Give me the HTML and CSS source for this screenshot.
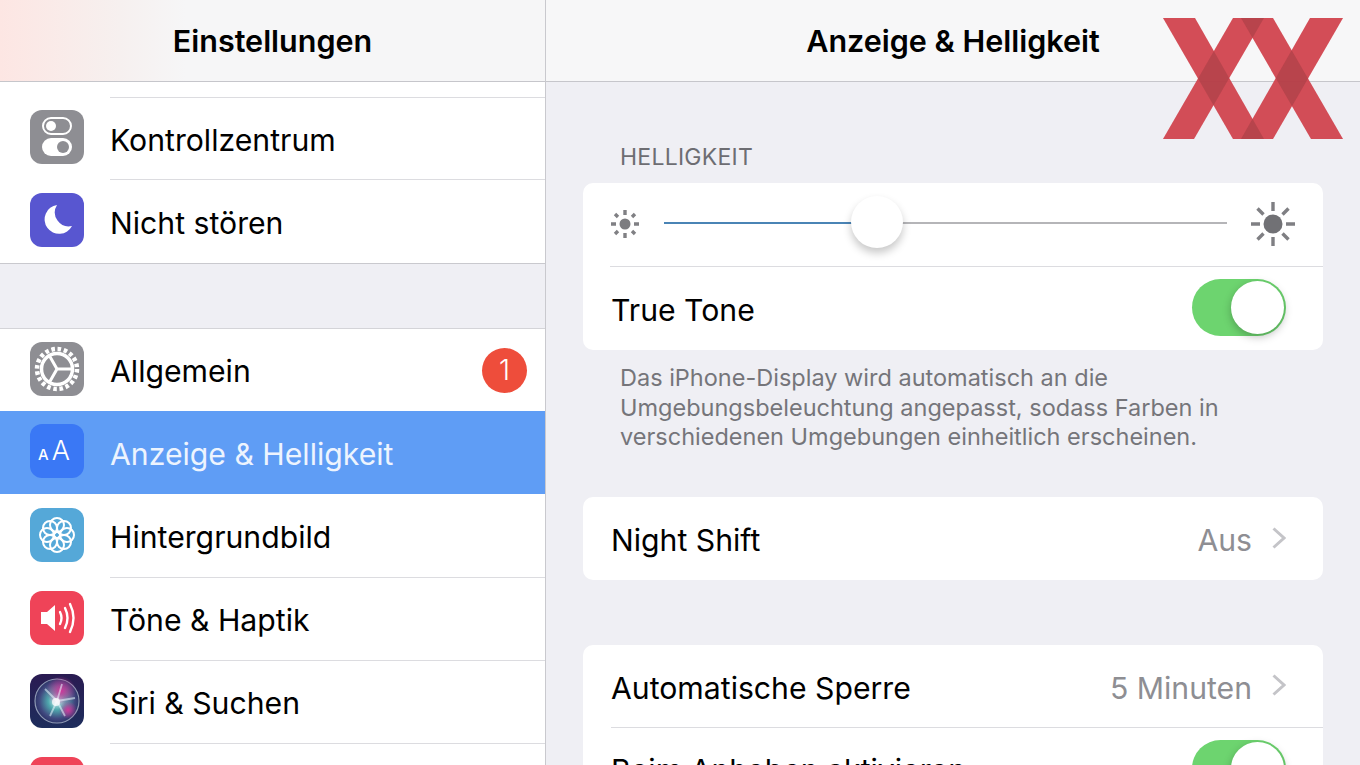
FILE: index.html
```html
<!DOCTYPE html>
<html lang="de">
<head>
<meta charset="utf-8">
<title>Anzeige &amp; Helligkeit</title>
<link rel="stylesheet" href="styles.css">
</head>
<body>
<div class="screen">

  <!-- Left column: settings list -->
  <div class="sidebar">
    <div class="navBar navBarLeft">Einstellungen</div>
    <div class="listGroup listGroupTop">
      <div class="listRow">
        <div class="appIcon iconGray">
          <svg viewBox="0 0 54 54"><rect x="13" y="8" width="28" height="16" rx="8" fill="none" stroke="#fff" stroke-width="2"/><circle cx="21" cy="16" r="5" fill="#fff"/><rect x="12" y="28" width="30" height="18" rx="9" fill="#fff"/><circle cx="33" cy="37" r="6" fill="#8e8e93"/></svg>
        </div>
        <div class="listLabel">Kontrollzentrum</div>
      </div>
      <div class="listRow lastRow">
        <div class="appIcon iconIndigo">
          <svg viewBox="0 0 54 54"><path d="M27 12A14.500 14.500 0 1 0 42 33A14 14 0 0 1 27 12Z" fill="#fff"/></svg>
        </div>
        <div class="listLabel">Nicht stören</div>
      </div>
    </div>
    <div class="listGroup listGroupNext">
      <div class="listRow">
        <div class="appIcon iconGray">
          <svg viewBox="0 0 54 54"><circle cx="27" cy="27" r="20" fill="none" stroke="#fff" stroke-width="4.500" stroke-dasharray="3.600 2.680"/><circle cx="27" cy="27" r="15.500" fill="none" stroke="#fff" stroke-width="3.500"/><path d="M27 27L42 27M27 27L19 13M27 27L19 41" stroke="#fff" stroke-width="3"/></svg>
        </div>
        <div class="listLabel">Allgemein<span class="badge">1</span></div>
      </div>
      <div class="listRow selectedRow">
        <div class="appIcon iconBlue"><span class="aaSmall">A</span><span class="aaBig">A</span></div>
        <div class="listLabel">Anzeige &amp; Helligkeit</div>
      </div>
      <div class="listRow">
        <div class="appIcon iconSky">
          <svg viewBox="0 0 54 54"><g fill="none" stroke="#fff" stroke-width="2"><circle cx="27" cy="27" r="3"/><circle cx="27" cy="17" r="7"/><circle cx="27" cy="37" r="7"/><circle cx="17" cy="27" r="7"/><circle cx="37" cy="27" r="7"/><circle cx="20" cy="20" r="7"/><circle cx="34" cy="20" r="7"/><circle cx="20" cy="34" r="7"/><circle cx="34" cy="34" r="7"/></g></svg>
        </div>
        <div class="listLabel">Hintergrundbild</div>
      </div>
      <div class="listRow">
        <div class="appIcon iconRed">
          <svg viewBox="0 0 54 54"><path d="M11 21H17L25 14V40L17 33H11Z" fill="#fff"/><g fill="none" stroke="#fff" stroke-width="2.400" stroke-linecap="round"><path d="M30 21Q33 27 30 33"/><path d="M35 17Q40 27 35 37"/><path d="M40 13Q47 27 40 41"/></g></svg>
        </div>
        <div class="listLabel">Töne &amp; Haptik</div>
      </div>
      <div class="listRow">
        <div class="appIcon iconSiri">
          <svg viewBox="0 0 54 54">
            <defs>
              <radialGradient id="siriBall" cx="50%" cy="50%" r="50%"><stop offset="0" stop-color="#d8f6f8"/><stop offset=".4" stop-color="#4fa7ad"/><stop offset=".8" stop-color="#40487f"/><stop offset="1" stop-color="#2d3468"/></radialGradient>
              <radialGradient id="siriPink" cx="50%" cy="50%" r="50%"><stop offset="0" stop-color="#d0379a"/><stop offset="1" stop-color="#d0379a" stop-opacity="0"/></radialGradient>
            </defs>
            <circle cx="27" cy="27" r="22" fill="url(#siriBall)" stroke="#8f9ab5" stroke-width="1.200"/>
            <circle cx="31" cy="17" r="15" fill="url(#siriPink)"/>
            <circle cx="38" cy="36" r="9" fill="url(#siriPink)"/>
            <path d="M27 27L15 15M27 27L20 42M27 27L45 24M27 27L35 42M27 27L32 10" stroke="#eaf8ff" stroke-width="1.800" stroke-opacity=".55"/>
            <circle cx="26" cy="28" r="4" fill="#fff" fill-opacity=".75"/>
          </svg>
        </div>
        <div class="listLabel">Siri &amp; Suchen</div>
      </div>
      <div class="listRow">
        <div class="appIcon iconRed"></div>
        <div class="listLabel"></div>
      </div>
    </div>
  </div>

  <!-- Right column: detail page -->
  <div class="detail">
    <div class="navBar">Anzeige &amp; Helligkeit</div>
    <div class="sectionTitle">HELLIGKEIT</div>

    <div class="card">
      <div class="sliderRow">
        <svg class="sunSmall" viewBox="0 0 30 30"><circle cx="15" cy="15" r="5.500" fill="#7c7c80"/><g stroke="#808084" stroke-width="3.400"><path d="M15 1V6M15 24V29M1 15H6M24 15H29M5 5L8 8M22 22L25 25M5 25L8 22M22 8L25 5"/></g></svg>
        <div class="track">
          <div class="trackFill"></div>
          <div class="thumb"></div>
        </div>
        <svg class="sunBig" viewBox="0 0 44 44"><circle cx="22" cy="22" r="9.500" fill="#717175"/><g stroke="#7f7f83" stroke-width="3.400"><path d="M22 0V9M22 35V44M0 22H9M35 22H44M6.500 6.500L12.500 12.500M31.500 31.500L37.500 37.500M6.500 37.500L12.500 31.500M31.500 12.500L37.500 6.500"/></g></svg>
      </div>
      <div class="cardRow">
        <div class="rowInner">
          <span>True Tone</span>
          <div class="toggle"><div class="knob"></div></div>
        </div>
      </div>
    </div>
    <div class="sectionNote">Das iPhone-Display wird automatisch an die Umgebungsbeleuchtung angepasst, sodass Farben in verschiedenen Umgebungen einheitlich erscheinen.</div>

    <div class="card cardNight">
      <div class="cardRow">
        <div class="rowInner noLine">
          <span class="lowerText">Night Shift</span>
          <div class="rowValue lowerText">Aus
            <svg class="chevron" viewBox="0 0 14 22"><path d="M1.500 1.500L12 11L1.500 20.500" fill="none" stroke="#c4c4c8" stroke-width="3"/></svg>
          </div>
        </div>
      </div>
    </div>

    <div class="card cardLock">
      <div class="cardRow">
        <div class="rowInner">
          <span class="lowerText">Automatische Sperre</span>
          <div class="rowValue lowerText">5 Minuten
            <svg class="chevron" viewBox="0 0 14 22"><path d="M1.500 1.500L12 11L1.500 20.500" fill="none" stroke="#c4c4c8" stroke-width="3"/></svg>
          </div>
        </div>
      </div>
      <div class="cardRow">
        <div class="rowInner noLine">
          <span>Beim Anheben aktivieren</span>
          <div class="toggle"><div class="knob"></div></div>
        </div>
      </div>
    </div>
  </div>

  <!-- Watermark over the top right corner -->
  <svg class="watermark" viewBox="0 0 180 122">
    <g fill="#f3505c" opacity=".95">
      <polygon points="0,0 32,0 101,121 70,121"/>
      <polygon points="70,0 101,0 31,121 0,121"/>
      <polygon points="78,0 110,0 180,121 148,121"/>
      <polygon points="147,0 180,0 110,121 78,121"/>
    </g>
    <g fill="#140f0f" fill-opacity=".14">
      <polygon points="0,0 32,0 101,121 70,121"/>
      <polygon points="70,0 101,0 31,121 0,121"/>
      <polygon points="78,0 110,0 180,121 148,121"/>
      <polygon points="147,0 180,0 110,121 78,121"/>
    </g>
  </svg>
</div>
</body>
</html>
```

FILE: styles.css
```css
* {
  box-sizing: border-box;
}
html, body {
  margin: 0;
  height: 765px;
  overflow: hidden;
}
body {
  font-family: "Inter", "Liberation Sans", sans-serif;
  font-size: 30.2px;
  color: #000;
  background-color: #efeff4;
}
.screen {
  position: relative;
  display: flex;
  height: 765px;
  overflow: hidden;
}

/* Nav bars */
.navBar {
  height: 82px;
  display: flex;
  align-items: center;
  justify-content: center;
  font-size: 30.5px;
  font-weight: 600;
  background-color: #f7f7f8;
  border-bottom: 1px solid #c6c6cb;
}
.navBarLeft {
  background-image: linear-gradient(to right, #fde6e3 0, #f6f0ef 22%, #f6f6f7 34%);
}

/* Left column */
.sidebar {
  flex: 0 0 546px;
  height: 765px;
  overflow: hidden;
  background-color: #efeff4;
  border-right: 1px solid #c9c9ce;
}
.listGroup {
  background-color: #fff;
}
.listGroupTop {
  padding-top: 15px;
  border-bottom: 1px solid #c9c9ce;
}
.listGroupTop .listRow:first-child .listLabel {
  border-top: 1px solid #dcdce0;
}
.listGroupNext {
  margin-top: 64px;
  border-top: 1px solid #d4d4d8;
}
.listRow {
  display: flex;
  align-items: center;
  height: 83px;
}
.appIcon {
  flex: 0 0 54px;
  width: 54px;
  height: 54px;
  margin-left: 30px;
  margin-right: 26px;
  margin-bottom: 3px;
  border-radius: 12px;
  overflow: hidden;
}
.appIcon svg {
  display: block;
  width: 54px;
  height: 54px;
}
.iconGray { background-color: #8e8e93; }
.iconIndigo { background-color: #5856d0; }
.iconBlue {
  background-color: #3a78f5;
  color: #fff;
  display: flex;
  align-items: baseline;
  justify-content: center;
  padding-right: 6px;
  line-height: 54px;
}
.iconSky { background-color: #55a8d8; }
.iconRed { background-color: #ef4358; }
.iconSiri { background: linear-gradient(#2a1b52, #1d2d5c); }
.aaSmall {
  font-size: 15px;
  font-weight: 500;
  margin-right: 3px;
}
.aaBig {
  font-size: 27px;
  font-weight: 300;
}
.listLabel {
  flex: 1;
  height: 83px;
  display: flex;
  align-items: center;
  justify-content: space-between;
  padding-top: 2px;
  padding-right: 18px;
  border-bottom: 1px solid #dcdce0;
}
.lastRow .listLabel {
  border-bottom: none;
}
.badge {
  width: 45px;
  height: 45px;
  margin-top: -2px;
  border-radius: 50%;
  background-color: #ee4d3b;
  color: #fff;
  display: flex;
  align-items: center;
  justify-content: center;
  font-size: 28px;
  font-weight: 300;
}
.selectedRow {
  margin-top: -1px;
  margin-bottom: 1px;
  position: relative;
  background-color: #5f9df5;
  color: #edf4fe;
}
.selectedRow .listLabel {
  border-bottom: none;
}

/* Right column */
.detail {
  flex: 1;
  height: 765px;
  overflow: hidden;
}
.sectionTitle {
  padding: 60px 0 11px 74px;
  font-size: 23px;
  letter-spacing: 0.25px;
  line-height: 30px;
  color: #6d6d72;
}
.card {
  margin: 0 37px;
  background-color: #fff;
  border-radius: 10px;
}
.sliderRow {
  display: flex;
  align-items: center;
  height: 84px;
  margin-left: 27px;
  padding-right: 28px;
  padding-bottom: 1px;
  border-bottom: 1px solid #dcdce0;
}
.sunSmall {
  flex: 0 0 30px;
  width: 30px;
  height: 30px;
}
.sunBig {
  flex: 0 0 44px;
  width: 44px;
  height: 44px;
}
.track {
  position: relative;
  flex: 1;
  height: 2px;
  margin: 0 24px 2px;
  background-color: #b5b5b8;
}
.trackFill {
  width: 213px;
  height: 2px;
  background-color: #4a84b5;
}
.thumb {
  position: absolute;
  left: 187px;
  top: -26px;
  width: 52px;
  height: 52px;
  border-radius: 50%;
  background-color: #fff;
  box-shadow: 0 5px 9px rgba(0, 0, 0, 0.22);
}
.cardRow {
  padding-left: 28px;
}
.rowInner {
  display: flex;
  align-items: center;
  justify-content: space-between;
  height: 83px;
  padding-right: 37px;
  border-bottom: 1px solid #dcdce0;
}
.rowInner span {
  padding-top: 2px;
}
.rowInner .lowerText {
  padding-top: 4px;
}
.noLine, .card .cardRow:last-child .rowInner {
  border-bottom: none;
}
.rowValue {
  display: flex;
  align-items: center;
  padding-top: 2px;
  color: #8e8e93;
}
.chevron {
  width: 14px;
  height: 22px;
  margin-left: 20px;
  margin-top: -5px;
}
.toggle {
  position: relative;
  width: 94px;
  height: 57px;
  margin-top: -2px;
  border-radius: 29px;
  background-color: #6dd46f;
}
.knob {
  position: absolute;
  right: 2px;
  top: 2px;
  width: 53px;
  height: 53px;
  border-radius: 50%;
  background-color: #fff;
  box-shadow: 0 3px 8px rgba(0, 0, 0, 0.25);
}
.sectionNote {
  padding: 13px 74px 0 74px;
  font-size: 23.5px;
  line-height: 29.6px;
  color: #75757a;
}
.cardNight {
  margin-top: 45px;
}
.cardLock {
  margin-top: 65px;
}

/* Watermark */
.watermark {
  position: absolute;
  left: 1163px;
  top: 18px;
  width: 180px;
  height: 122px;
}
```
